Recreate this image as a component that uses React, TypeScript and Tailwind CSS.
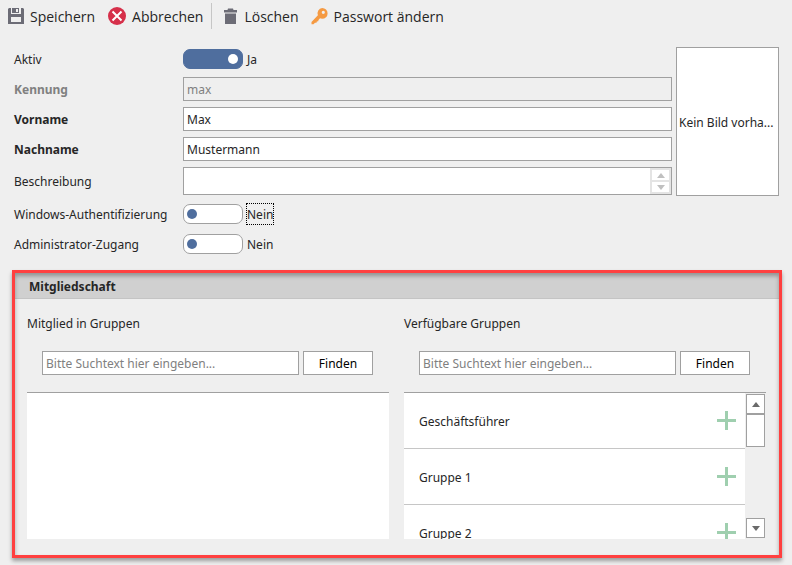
import React, { useState } from 'react';
import type { ReactNode } from 'react';

interface FieldRowProps {
  id: string;
  label: string;
  labelClass?: string;
  children: ReactNode;
}

function FieldRow({ id, label, labelClass = '', children }: FieldRowProps) {
  return (
    <div className="flex items-center">
      <label htmlFor={id} className={`w-[169px] shrink-0 pt-[2px] leading-5 ${labelClass}`}>
        {label}
      </label>
      {children}
    </div>
  );
}

interface ToggleProps {
  id: string;
  checked: boolean;
  focused?: boolean;
  onChange: (value: boolean) => void;
}

function Toggle({ id, checked, focused = false, onChange }: ToggleProps) {
  return (
    <div className="flex h-6 items-center gap-[3px]">
      <input
        id={id}
        type="checkbox"
        role="switch"
        checked={checked}
        onChange={(e) => onChange(e.target.checked)}
        className="h-5 w-[60px] appearance-none rounded-[7px] border border-[#a0a0a0] bg-white px-[3px] before:mt-1 before:block before:h-[10px] before:w-[10px] before:rounded-full before:bg-[#4f6e9e] checked:border-[#4f6e9e] checked:bg-[#4f6e9e] checked:px-1 checked:before:ml-auto checked:before:bg-white"
      />
      <span
        className={`border border-dotted pt-[2px] leading-[18px] ${focused ? 'border-black' : 'border-transparent'}`}
      >
        {checked ? 'Ja' : 'Nein'}
      </span>
    </div>
  );
}

function ToolButton({ icon, label }: { icon: ReactNode; label: string }) {
  return (
    <button type="button" className="flex items-center gap-[6px]">
      {icon}
      {label}
    </button>
  );
}

function Arrow({ down = false }: { down?: boolean }) {
  return (
    <svg width="8" height="5" viewBox="0 0 8 5" fill="currentColor" aria-hidden="true">
      {down ? <path d="M0 0h8L4 5z" /> : <path d="M0 5h8L4 0z" />}
    </svg>
  );
}

function GroupColumn({ title, children }: { title: string; children: ReactNode }) {
  const [query, setQuery] = useState('');

  return (
    <section className="min-w-0 flex-1">
      <h3 className="pt-[2px] leading-5">{title}</h3>
      <form
        className="mt-[17px] flex gap-1 pr-4 pl-[15px]"
        onSubmit={(e) => e.preventDefault()}
      >
        <input
          type="text"
          aria-label={title}
          placeholder="Bitte Suchtext hier eingeben..."
          value={query}
          onChange={(e) => setQuery(e.target.value)}
          className="h-6 min-w-0 flex-1 border border-[#a0a0a0] bg-white px-[3px] placeholder:text-[#808080]"
        />
        <button
          type="submit"
          className="h-6 w-[70px] border border-[#a0a0a0] bg-white pt-[2px] leading-5 text-black"
        >
          Finden
        </button>
      </form>
      <div className="mt-[17px] flex h-[147px] border-t border-[#a0a0a0]">{children}</div>
    </section>
  );
}

const groups = ['Geschäftsführer', 'Gruppe 1', 'Gruppe 2'];

const inputClass = 'h-6 min-w-0 flex-1 border border-[#a0a0a0] px-[3px]';

export default function App() {
  const [active, setActive] = useState(true);
  const [windowsAuth, setWindowsAuth] = useState(false);
  const [admin, setAdmin] = useState(false);

  return (
    <div className="min-h-screen bg-[#efefef] pb-[7px] font-['Noto_Sans','Open_Sans',sans-serif] text-[12px] text-[#262626]">
      <header className="flex h-8 items-center px-2 font-['Open_Sans',sans-serif] text-[14px]">
        <ToolButton
          label="Speichern"
          icon={
            <svg width="16" height="16" viewBox="0 0 16 16" aria-hidden="true">
              <path
                fill="#6c6c76"
                fillRule="evenodd"
                d="M0 1l1-1h2v6h10V0h2l1 1v15H0zM3 9v5h10V9zM4 0h7v5H4zM8 1v3h2V1z"
              />
            </svg>
          }
        />
        <div className="ml-[13px]">
          <ToolButton
            label="Abbrechen"
            icon={
              <svg width="18" height="18" viewBox="0 0 18 18" aria-hidden="true">
                <circle cx="9" cy="9" r="9" fill="#d6304a" />
                <path d="M4.500 4.500l9 9M13.500 4.500l-9 9" stroke="#fff" strokeWidth="2" />
              </svg>
            }
          />
        </div>
        <div className="ml-2 h-[26px] w-px bg-[#c6c6c6]" />
        <div className="ml-[11px]">
          <ToolButton
            label="Löschen"
            icon={
              <svg width="15" height="16" viewBox="0 0 15 16" fill="#6c6c76" aria-hidden="true">
                <path d="M1 2h3.500l.5-1.500h5l.5 1.500H14v2.500H1zM2 5.500h11V16H2z" />
              </svg>
            }
          />
        </div>
        <div className="ml-3">
          <ToolButton
            label="Passwort ändern"
            icon={
              <svg width="17" height="17" viewBox="0 0 17 17" aria-hidden="true">
                <path
                  fill="#f59a42"
                  fillRule="evenodd"
                  d="M11.200 0a5.200 5.200 0 0 1 0 10.800c-.9 0-1.600-.2-2.200-.5L7.500 12l-.3 1.300-1.400.2-.3 1.200-1.500.1L2.500 16.200H.5v-2.200l6.400-6.800A5.300 5.300 0 0 1 11.200 0zM12.300 2.700a1.600 1.600 0 1 0 0 3.200 1.600 1.600 0 0 0 0-3.200z"
                />
              </svg>
            }
          />
        </div>
      </header>

      <main className="pt-[15px]">
        <div className="flex items-start gap-1 pr-[13px] pl-[14px]">
          <div className="flex min-w-0 flex-1 flex-col gap-[6px]">
            <FieldRow id="aktiv" label="Aktiv">
              <Toggle id="aktiv" checked={active} onChange={setActive} />
            </FieldRow>
            <FieldRow id="kennung" label="Kennung" labelClass="font-bold text-[#808080]">
              <input
                id="kennung"
                type="text"
                defaultValue="max"
                disabled
                className={`${inputClass} bg-[#efefef] text-[#808080]`}
              />
            </FieldRow>
            <FieldRow id="vorname" label="Vorname" labelClass="font-bold">
              <input id="vorname" type="text" defaultValue="Max" className={`${inputClass} bg-white`} />
            </FieldRow>
            <FieldRow id="nachname" label="Nachname" labelClass="font-bold">
              <input
                id="nachname"
                type="text"
                defaultValue="Mustermann"
                className={`${inputClass} bg-white`}
              />
            </FieldRow>
            <FieldRow id="beschreibung" label="Beschreibung">
              <div className="flex h-7 min-w-0 flex-1 border border-[#a0a0a0] bg-white">
                <textarea
                  id="beschreibung"
                  rows={1}
                  className="min-w-0 flex-1 resize-none overflow-hidden px-[3px] py-[3px]"
                />
                <div className="flex w-[21px] flex-col border-2 border-[#e4e4e4] text-[#c0c0c0]">
                  <button
                    type="button"
                    aria-label="Nach oben"
                    className="flex flex-1 items-center justify-center border-b-2 border-[#e4e4e4]"
                  >
                    <Arrow />
                  </button>
                  <button
                    type="button"
                    aria-label="Nach unten"
                    className="flex flex-1 items-center justify-center"
                  >
                    <Arrow down />
                  </button>
                </div>
              </div>
            </FieldRow>
          </div>
          <div className="flex h-[149px] w-[103px] items-center border border-[#a0a0a0] bg-white px-[2px] pt-[2px] leading-5">
            <span>Kein Bild vorha...</span>
          </div>
        </div>

        <div className="mt-[6px] flex flex-col gap-[6px] px-[14px]">
          <FieldRow id="windows" label="Windows-Authentifizierung">
            <Toggle id="windows" checked={windowsAuth} focused onChange={setWindowsAuth} />
          </FieldRow>
          <FieldRow id="admin" label="Administrator-Zugang">
            <Toggle id="admin" checked={admin} onChange={setAdmin} />
          </FieldRow>
        </div>

        {/* Membership panel */}
        <section className="relative mt-[14px] mr-[10px] ml-3 border-3 border-[#ff4040] pb-4 shadow-[0_3px_4px_rgba(0,0,0,0.35)]">
          <div className="pointer-events-none absolute inset-0 shadow-[inset_0_3px_4px_rgba(0,0,0,0.3)]" />
          <h2 className="h-[26px] border-b border-[#c4c4c4] bg-[#d0d0d0] pl-[14px] leading-[28px] font-bold">
            Mitgliedschaft
          </h2>
          <div className="flex gap-[15px] pt-[13px] pr-[13px] pl-3">
            <GroupColumn title="Mitglied in Gruppen">
              <div className="flex-1 bg-white" />
            </GroupColumn>
            <GroupColumn title="Verfügbare Gruppen">
              <ul className="min-w-0 flex-1 overflow-hidden bg-white">
                {groups.map((group) => (
                  <li
                    key={group}
                    className="flex h-14 items-center justify-between border-b border-[#c6c6c6] pr-[9px] pl-[15px]"
                  >
                    <span className="pt-[2px] leading-5">{group}</span>
                    <button type="button" aria-label={`${group} hinzufügen`}>
                      <svg width="19" height="19" viewBox="0 0 19 19" aria-hidden="true">
                        <path d="M8 0h3v8h8v3h-8v8H8v-8H0V8h8z" fill="#9fcfaf" />
                      </svg>
                    </button>
                  </li>
                ))}
              </ul>
              <div className="flex w-[21px] flex-col px-px py-px text-[#6a6a6a]">
                <button
                  type="button"
                  aria-label="Nach oben blättern"
                  className="flex h-5 items-center justify-center border border-[#a0a0a0] bg-white"
                >
                  <Arrow />
                </button>
                <div className="h-[33px] border border-[#a0a0a0] bg-white" />
                <button
                  type="button"
                  aria-label="Nach unten blättern"
                  className="mt-auto flex h-5 items-center justify-center border border-[#a0a0a0] bg-white"
                >
                  <Arrow down />
                </button>
              </div>
            </GroupColumn>
          </div>
        </section>
      </main>
    </div>
  );
}
